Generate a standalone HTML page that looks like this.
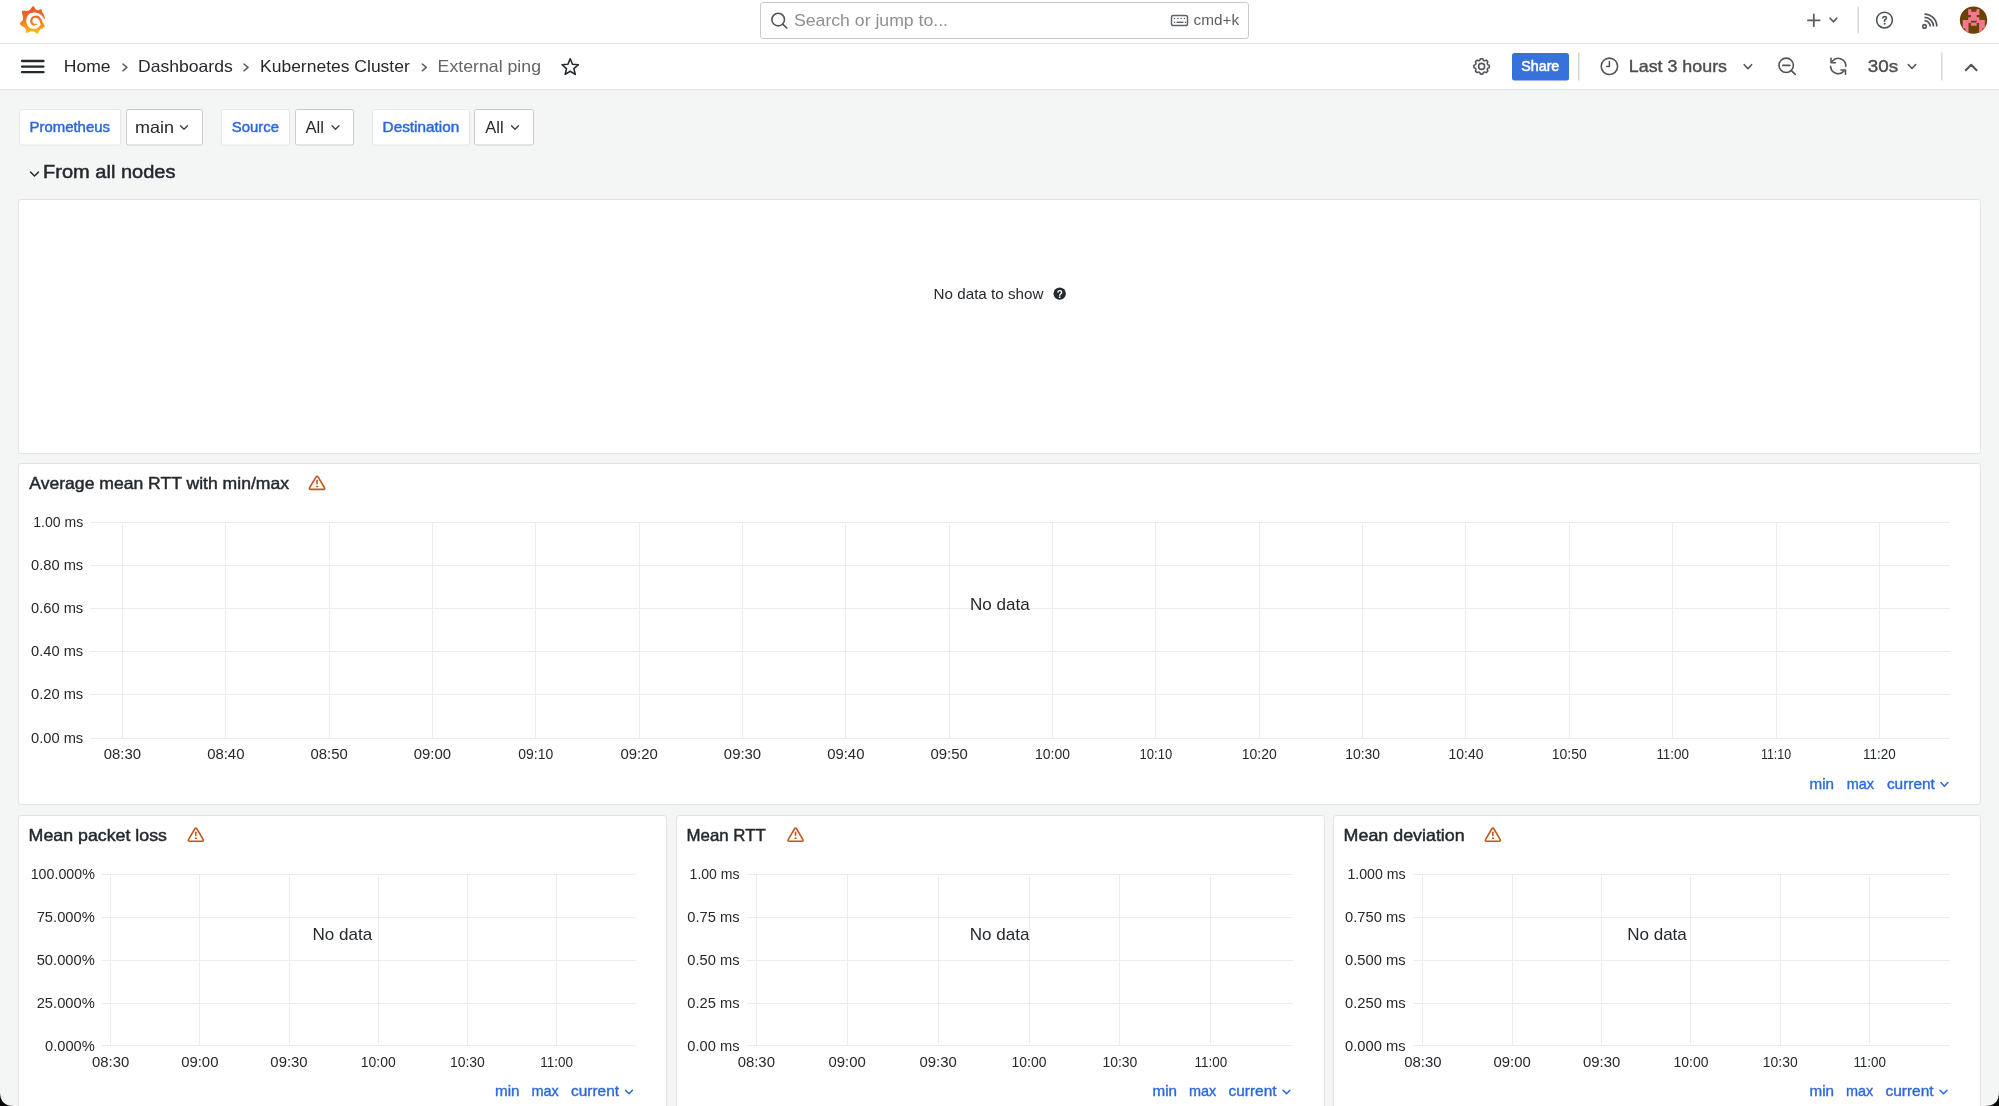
<!DOCTYPE html>
<html><head><meta charset="utf-8"><title>External ping - Dashboards - Grafana</title>
<style>
html,body{margin:0;padding:0;background:#f4f5f5;overflow:hidden}
svg{display:block;font-family:"Liberation Sans", sans-serif;will-change:transform}
</style></head>
<body>
<svg width="1999" height="1106" viewBox="0 0 1999 1106">
<rect x="0" y="0" width="1999" height="1106" fill="#f4f5f5" stroke="none" stroke-width="1" rx="0"/>
<rect x="0" y="0" width="1999" height="43" fill="#ffffff" stroke="none" stroke-width="1" rx="0"/>
<rect x="0" y="44" width="1999" height="45" fill="#ffffff" stroke="none" stroke-width="1" rx="0"/>
<line x1="0" y1="43.5" x2="1999" y2="43.5" stroke="#e4e5e6" stroke-width="1"/>
<line x1="0" y1="89.5" x2="1999" y2="89.5" stroke="#e4e5e6" stroke-width="1"/>
<defs><linearGradient id="lg" gradientUnits="userSpaceOnUse" x1="0" y1="80" x2="0" y2="1040"><stop offset="0" stop-color="#f05228"/><stop offset="0.45" stop-color="#f26d22"/><stop offset="0.75" stop-color="#f59c1a"/><stop offset="1" stop-color="#fbca0a"/></linearGradient></defs>
<g transform="translate(16 4) scale(0.028935)">
<path fill="url(#lg)" d="M600 80 C640 110 660 170 700 195 C740 215 790 230 830 185 C880 160 900 200 895 270 C940 320 985 400 1000 500 C1000 540 985 540 975 530 L935 640 C950 700 1000 740 1000 775 C960 820 900 810 860 850 C800 900 800 960 760 1025 C720 1040 690 1000 660 965 C600 950 520 950 470 960 C420 990 380 1010 350 990 C340 940 340 880 310 830 C270 780 160 760 130 690 C140 640 200 600 235 560 C250 500 240 430 220 370 C200 300 200 250 230 235 C290 225 360 250 420 235 C470 215 510 180 540 120 C560 90 580 75 600 80 Z"/>
<path fill="#fff" d="M610 290 C760 290 870 340 945 470 C985 540 990 560 1010 580 L935 640 L880 700 L820 760 C760 830 700 860 620 862 C470 862 355 740 355 576 C355 410 470 290 610 290 Z"/>
<path fill="none" stroke="url(#lg)" stroke-width="78" stroke-linecap="butt" d="M880 860 C900 760 895 640 850 560 C800 460 720 420 650 440 C560 460 520 540 530 610 C540 680 590 720 640 718"/>
<path fill="none" stroke="url(#lg)" stroke-width="40" stroke-linecap="round" d="M640 718 C670 716 695 705 715 700"/>
</g>
<rect x="760.5" y="2.5" width="488" height="36" fill="#fff" stroke="#c8cacc" stroke-width="1" rx="2.5"/>
<circle cx="778.2" cy="19.6" r="6.3" fill="none" stroke="#505458" stroke-width="1.6"/>
<path d="M782.9 24.3 L786.8 28.0" fill="none" stroke="#505458" stroke-width="1.7" stroke-linecap="round" stroke-linejoin="round"/>
<text x="794.0" y="26.3" font-size="17" fill="#8d9093" font-weight="400" text-anchor="start" textLength="154.0" lengthAdjust="spacingAndGlyphs">Search or jump to...</text>
<rect x="1171.5" y="15.5" width="16" height="10" fill="none" stroke="#5f6367" stroke-width="1.5" rx="1.8"/>
<rect x="1173.9" y="17.8" width="1.3" height="1.3" fill="#5f6367" stroke="none" stroke-width="1" rx="0"/>
<rect x="1177.2" y="17.8" width="1.3" height="1.3" fill="#5f6367" stroke="none" stroke-width="1" rx="0"/>
<rect x="1180.5" y="17.8" width="1.3" height="1.3" fill="#5f6367" stroke="none" stroke-width="1" rx="0"/>
<rect x="1183.8000000000002" y="17.8" width="1.3" height="1.3" fill="#5f6367" stroke="none" stroke-width="1" rx="0"/>
<rect x="1176.5" y="21.6" width="7" height="1.4" fill="#5f6367" stroke="none" stroke-width="1" rx="0"/>
<rect x="1173.9" y="21.6" width="1.3" height="1.4" fill="#5f6367" stroke="none" stroke-width="1" rx="0"/>
<rect x="1184.8" y="21.6" width="1.3" height="1.4" fill="#5f6367" stroke="none" stroke-width="1" rx="0"/>
<text x="1193.6" y="25.0" font-size="14" fill="#5c6064" font-weight="400" text-anchor="start" textLength="45.6" lengthAdjust="spacingAndGlyphs">cmd+k</text>
<path d="M1813.8 14.4 V26.2 M1807.9 20.3 H1819.7" fill="none" stroke="#585c60" stroke-width="1.75" stroke-linecap="round" stroke-linejoin="round"/>
<path d="M1830.1 18.2 L1833.4 21.8 L1836.7 18.2" fill="none" stroke="#585c60" stroke-width="1.7" stroke-linecap="round" stroke-linejoin="round"/>
<line x1="1858.3" y1="6.5" x2="1858.3" y2="33.5" stroke="#d5d7d8" stroke-width="1.5"/>
<circle cx="1884.5" cy="20.1" r="7.9" fill="none" stroke="#505458" stroke-width="1.6"/>
<path d="M1882.8 18.0 Q1882.9 16.5 1884.6 16.5 Q1886.4 16.5 1886.4 18.0 Q1886.4 19.3 1884.6 20.0 V21.2" fill="none" stroke="#505458" stroke-width="1.6" stroke-linecap="round" stroke-linejoin="round"/>
<circle cx="1884.6" cy="23.7" r="1.0" fill="#505458"/>
<circle cx="1924.5" cy="26.4" r="1.75" fill="none" stroke="#53575b" stroke-width="1.6"/>
<path d="M1924.50 20.70 A5.7 5.7 0 0 1 1930.20 26.40" fill="none" stroke="#53575b" stroke-width="1.7" stroke-linecap="butt"/>
<path d="M1924.50 17.40 A9.0 9.0 0 0 1 1933.50 26.40" fill="none" stroke="#53575b" stroke-width="1.7" stroke-linecap="butt"/>
<path d="M1924.50 14.10 A12.3 12.3 0 0 1 1936.80 26.40" fill="none" stroke="#53575b" stroke-width="1.7" stroke-linecap="butt"/>
<clipPath id="avc"><circle cx="1973.5" cy="20.1" r="13.7"/></clipPath>
<g clip-path="url(#avc)">
<rect x="1959" y="6" width="29" height="29" fill="#6a4206"/>
<path fill="#f3778f" d="M1968.19 9.13h3.03v3.03h-3.03ZM1976.38 9.13h3.03v3.03h-3.03ZM1968.19 11.86h3.03v3.03h-3.03ZM1970.92 11.86h3.03v3.03h-3.03ZM1973.65 11.86h3.03v3.03h-3.03ZM1976.38 11.86h3.03v3.03h-3.03ZM1970.92 14.59h3.03v3.03h-3.03ZM1973.65 14.59h3.03v3.03h-3.03ZM1968.19 17.32h3.03v3.03h-3.03ZM1970.92 17.32h3.03v3.03h-3.03ZM1973.65 17.32h3.03v3.03h-3.03ZM1976.38 17.32h3.03v3.03h-3.03ZM1962.73 20.05h3.03v3.03h-3.03ZM1965.46 20.05h3.03v3.03h-3.03ZM1968.19 20.05h3.03v3.03h-3.03ZM1976.38 20.05h3.03v3.03h-3.03ZM1979.11 20.05h3.03v3.03h-3.03ZM1981.84 20.05h3.03v3.03h-3.03ZM1962.73 22.78h3.03v3.03h-3.03ZM1965.46 22.78h3.03v3.03h-3.03ZM1970.92 22.78h3.03v3.03h-3.03ZM1973.65 22.78h3.03v3.03h-3.03ZM1979.11 22.78h3.03v3.03h-3.03ZM1981.84 22.78h3.03v3.03h-3.03ZM1962.73 25.51h3.03v3.03h-3.03ZM1965.46 25.51h3.03v3.03h-3.03ZM1979.11 25.51h3.03v3.03h-3.03ZM1981.84 25.51h3.03v3.03h-3.03ZM1965.46 28.24h3.03v3.03h-3.03ZM1979.11 28.24h3.03v3.03h-3.03ZM1965.46 30.97h3.03v3.03h-3.03ZM1979.11 30.97h3.03v3.03h-3.03Z"/>
<rect x="1970.92" y="20.75" width="5.46" height="1.8" fill="#6a4206"/>
<rect x="1970.92" y="20.05" width="5.46" height="0.7" fill="#f3778f"/>
<rect x="1970.92" y="22.55" width="5.46" height="0.3" fill="#f3778f"/>
</g>
<path d="M22 61.0 H43.5" fill="none" stroke="#24292e" stroke-width="2.3" stroke-linecap="round" stroke-linejoin="round"/>
<path d="M22 66.6 H43.5" fill="none" stroke="#24292e" stroke-width="2.3" stroke-linecap="round" stroke-linejoin="round"/>
<path d="M22 72.2 H43.5" fill="none" stroke="#24292e" stroke-width="2.3" stroke-linecap="round" stroke-linejoin="round"/>
<text x="63.8" y="72.1" font-size="16.5" fill="#24292e" font-weight="400" text-anchor="start" textLength="46.8" lengthAdjust="spacingAndGlyphs">Home</text>
<path d="M122.9 64.0 L126.9 67.4 L122.9 70.8" fill="none" stroke="#5b5f62" stroke-width="1.55" stroke-linecap="round" stroke-linejoin="round"/>
<text x="138.0" y="72.1" font-size="16.5" fill="#24292e" font-weight="400" text-anchor="start" textLength="94.8" lengthAdjust="spacingAndGlyphs">Dashboards</text>
<path d="M244.0 64.0 L248.0 67.4 L244.0 70.8" fill="none" stroke="#5b5f62" stroke-width="1.55" stroke-linecap="round" stroke-linejoin="round"/>
<text x="260.0" y="72.1" font-size="16.5" fill="#24292e" font-weight="400" text-anchor="start" textLength="149.8" lengthAdjust="spacingAndGlyphs">Kubernetes Cluster</text>
<path d="M422.3 64.0 L426.3 67.4 L422.3 70.8" fill="none" stroke="#5b5f62" stroke-width="1.55" stroke-linecap="round" stroke-linejoin="round"/>
<text x="437.6" y="72.1" font-size="16.5" fill="#62666a" font-weight="400" text-anchor="start" textLength="103.4" lengthAdjust="spacingAndGlyphs">External ping</text>
<path d="M570.20 58.80 L572.49 64.24 L578.38 64.74 L573.91 68.61 L575.25 74.36 L570.20 71.30 L565.15 74.36 L566.49 68.61 L562.02 64.74 L567.91 64.24 Z" fill="none" stroke="#24292e" stroke-width="1.6" stroke-linecap="round" stroke-linejoin="round"/>
<path d="M1480.40 58.79 A7.7 7.7 0 0 1 1482.80 58.79 Q1483.48 61.87 1486.13 60.17 A7.7 7.7 0 0 1 1487.83 61.87 Q1486.13 64.52 1489.21 65.20 A7.7 7.7 0 0 1 1489.21 67.60 Q1486.13 68.28 1487.83 70.93 A7.7 7.7 0 0 1 1486.13 72.63 Q1483.48 70.93 1482.80 74.01 A7.7 7.7 0 0 1 1480.40 74.01 Q1479.72 70.93 1477.07 72.63 A7.7 7.7 0 0 1 1475.37 70.93 Q1477.07 68.28 1473.99 67.60 A7.7 7.7 0 0 1 1473.99 65.20 Q1477.07 64.52 1475.37 61.87 A7.7 7.7 0 0 1 1477.07 60.17 Q1479.72 61.87 1480.40 58.79 Z" fill="none" stroke="#505458" stroke-width="1.6" stroke-linejoin="round"/><circle cx="1481.6" cy="66.4" r="3.0" fill="none" stroke="#505458" stroke-width="1.6"/>
<rect x="1512" y="53" width="57" height="27.5" fill="#3671dc" stroke="none" stroke-width="1" rx="2.5"/>
<text x="1540.3" y="71.0" font-size="14.8" fill="#ffffff" font-weight="400" text-anchor="middle" textLength="38.0" lengthAdjust="spacingAndGlyphs" stroke="#ffffff" stroke-width="0.55">Share</text>
<line x1="1578.8" y1="52.5" x2="1578.8" y2="80.5" stroke="#d5d7d8" stroke-width="1.5"/>
<circle cx="1609.4" cy="66.3" r="8.2" fill="none" stroke="#505458" stroke-width="1.6"/>
<path d="M1609.4 61.6 V66.5 H1606.8" fill="none" stroke="#505458" stroke-width="1.5" stroke-linecap="round" stroke-linejoin="round"/>
<text x="1628.8" y="72.3" font-size="16.5" fill="#4a4e52" font-weight="400" text-anchor="start" textLength="98.2" lengthAdjust="spacingAndGlyphs" stroke="#4a4e52" stroke-width="0.4">Last 3 hours</text>
<path d="M1744.2 64.7 L1747.9 68.7 L1751.6 64.7" fill="none" stroke="#505458" stroke-width="1.6" stroke-linecap="round" stroke-linejoin="round"/>
<circle cx="1786.2" cy="65.3" r="7.2" fill="none" stroke="#505458" stroke-width="1.6"/>
<path d="M1791.6 70.8 L1795.2 74.3" fill="none" stroke="#505458" stroke-width="1.7" stroke-linecap="round" stroke-linejoin="round"/>
<path d="M1782.8 65.4 H1789.8" fill="none" stroke="#505458" stroke-width="1.7" stroke-linecap="round" stroke-linejoin="round"/>
<g fill="none" stroke="#505458" stroke-width="1.6" stroke-linecap="round" stroke-linejoin="round">
<path d="M1832.4 61.1 A7.6 7.6 0 0 1 1845.8 66.4"/>
<path d="M1830.6 66.2 A7.6 7.6 0 0 0 1844.0 70.9"/>
<path d="M1831.0 58.3 V62.8 H1835.4"/>
<path d="M1841.0 70.0 H1845.5 V74.3"/>
</g>
<text x="1867.8" y="71.9" font-size="16.5" fill="#4a4e52" font-weight="400" text-anchor="start" textLength="30.4" lengthAdjust="spacingAndGlyphs" stroke="#4a4e52" stroke-width="0.4">30s</text>
<path d="M1908.3 64.5 L1912.0 68.5 L1915.7 64.5" fill="none" stroke="#505458" stroke-width="1.6" stroke-linecap="round" stroke-linejoin="round"/>
<line x1="1941.8" y1="52.5" x2="1941.8" y2="80.5" stroke="#d5d7d8" stroke-width="1.5"/>
<path d="M1965.8 70.3 L1971.2 64.7 L1976.6 70.3" fill="none" stroke="#505458" stroke-width="2.0" stroke-linecap="round" stroke-linejoin="round"/>
<rect x="19.5" y="109.5" width="101" height="35.5" fill="#fff" stroke="#e4e5e6" stroke-width="1" rx="2"/>
<text x="29.5" y="132.2" font-size="15" fill="#2b67de" font-weight="400" text-anchor="start" textLength="80.5" lengthAdjust="spacingAndGlyphs" stroke="#2b67de" stroke-width="0.45">Prometheus</text>
<rect x="126.5" y="109.5" width="76" height="35.5" fill="#fff" stroke="#c9cbcd" stroke-width="1" rx="2"/>
<text x="135.0" y="133.0" font-size="16.5" fill="#24292e" font-weight="400" text-anchor="start" textLength="39.0" lengthAdjust="spacingAndGlyphs">main</text>
<path d="M180.5 125.7 L184.0 129.3 L187.5 125.7" fill="none" stroke="#3d4145" stroke-width="1.35" stroke-linecap="round" stroke-linejoin="round"/>
<rect x="221.5" y="109.5" width="68" height="35.5" fill="#fff" stroke="#e4e5e6" stroke-width="1" rx="2"/>
<text x="231.8" y="132.2" font-size="15" fill="#2b67de" font-weight="400" text-anchor="start" textLength="47.2" lengthAdjust="spacingAndGlyphs" stroke="#2b67de" stroke-width="0.45">Source</text>
<rect x="295.5" y="109.5" width="58" height="35.5" fill="#fff" stroke="#c9cbcd" stroke-width="1" rx="2"/>
<text x="305.5" y="133.0" font-size="16.5" fill="#24292e" font-weight="400" text-anchor="start" textLength="18.5" lengthAdjust="spacingAndGlyphs">All</text>
<path d="M332.0 125.7 L335.5 129.3 L339.0 125.7" fill="none" stroke="#3d4145" stroke-width="1.35" stroke-linecap="round" stroke-linejoin="round"/>
<rect x="372.5" y="109.5" width="97" height="35.5" fill="#fff" stroke="#e4e5e6" stroke-width="1" rx="2"/>
<text x="382.6" y="132.2" font-size="15" fill="#2b67de" font-weight="400" text-anchor="start" textLength="76.6" lengthAdjust="spacingAndGlyphs" stroke="#2b67de" stroke-width="0.45">Destination</text>
<rect x="474.5" y="109.5" width="59" height="35.5" fill="#fff" stroke="#c9cbcd" stroke-width="1" rx="2"/>
<text x="485.3" y="133.0" font-size="16.5" fill="#24292e" font-weight="400" text-anchor="start" textLength="18.3" lengthAdjust="spacingAndGlyphs">All</text>
<path d="M511.5 125.7 L515.0 129.3 L518.5 125.7" fill="none" stroke="#3d4145" stroke-width="1.35" stroke-linecap="round" stroke-linejoin="round"/>
<path d="M30.5 172.0 L34.5 176.0 L38.5 172.0" fill="none" stroke="#24292e" stroke-width="1.45" stroke-linecap="round" stroke-linejoin="round"/>
<text x="43.1" y="178.4" font-size="18.8" fill="#24292e" font-weight="400" text-anchor="start" textLength="132.3" lengthAdjust="spacingAndGlyphs" stroke="#24292e" stroke-width="0.5">From all nodes</text>
<rect x="18.5" y="199.5" width="1962" height="254" fill="#ffffff" stroke="#e3e4e5" stroke-width="1" rx="2.5"/>
<text x="933.6" y="298.8" font-size="15" fill="#24292e" font-weight="400" text-anchor="start" textLength="109.8" lengthAdjust="spacingAndGlyphs">No data to show</text>
<circle cx="1059.7" cy="293.6" r="6.2" fill="#24292e"/>
<text x="1059.7" y="297.6" font-size="10" fill="#ffffff" font-weight="700" text-anchor="middle">?</text>
<rect x="18.5" y="463.5" width="1962" height="341" fill="#ffffff" stroke="#e3e4e5" stroke-width="1" rx="2.5"/>
<text x="29.3" y="488.7" font-size="16.5" fill="#24292e" font-weight="400" text-anchor="start" textLength="259.7" lengthAdjust="spacingAndGlyphs" stroke="#24292e" stroke-width="0.45">Average mean RTT with min/max</text>
<path d="M315.92 477.19 Q317.05 475.30 318.18 477.19 L324.37 487.51 Q325.50 489.40 323.30 489.40 L310.80 489.40 Q308.60 489.40 309.73 487.51 Z" fill="none" stroke="#c0581c" stroke-width="1.6" stroke-linecap="round" stroke-linejoin="round"/>
<path d="M317.05 480.40 V483.70" fill="none" stroke="#c0581c" stroke-width="1.6" stroke-linecap="round" stroke-linejoin="round"/>
<path d="M316.55 486.40 H317.55" fill="none" stroke="#c0581c" stroke-width="1.5" stroke-linecap="round" stroke-linejoin="round"/>
<line x1="90.2" y1="522.5" x2="1950" y2="522.5" stroke="#ebecec" stroke-width="1"/>
<text x="83.2" y="527.0" font-size="14" fill="#24292e" font-weight="400" text-anchor="end" textLength="49.9" lengthAdjust="spacingAndGlyphs">1.00 ms</text>
<line x1="90.2" y1="565.5" x2="1950" y2="565.5" stroke="#ebecec" stroke-width="1"/>
<text x="83.2" y="570.1" font-size="14" fill="#24292e" font-weight="400" text-anchor="end" textLength="52.2" lengthAdjust="spacingAndGlyphs">0.80 ms</text>
<line x1="90.2" y1="608.5" x2="1950" y2="608.5" stroke="#ebecec" stroke-width="1"/>
<text x="83.2" y="613.2" font-size="14" fill="#24292e" font-weight="400" text-anchor="end" textLength="52.2" lengthAdjust="spacingAndGlyphs">0.60 ms</text>
<line x1="90.2" y1="651.5" x2="1950" y2="651.5" stroke="#ebecec" stroke-width="1"/>
<text x="83.2" y="656.3" font-size="14" fill="#24292e" font-weight="400" text-anchor="end" textLength="52.2" lengthAdjust="spacingAndGlyphs">0.40 ms</text>
<line x1="90.2" y1="694.5" x2="1950" y2="694.5" stroke="#ebecec" stroke-width="1"/>
<text x="83.2" y="699.4" font-size="14" fill="#24292e" font-weight="400" text-anchor="end" textLength="52.2" lengthAdjust="spacingAndGlyphs">0.20 ms</text>
<line x1="90.2" y1="738.5" x2="1950" y2="738.5" stroke="#ebecec" stroke-width="1"/>
<text x="83.2" y="742.5" font-size="14" fill="#24292e" font-weight="400" text-anchor="end" textLength="52.2" lengthAdjust="spacingAndGlyphs">0.00 ms</text>
<line x1="122.5" y1="522.4" x2="122.5" y2="738.4" stroke="#ebecec" stroke-width="1"/>
<text x="122.4" y="759.4" font-size="14" fill="#24292e" font-weight="400" text-anchor="middle" textLength="37.3" lengthAdjust="spacingAndGlyphs">08:30</text>
<line x1="225.5" y1="522.4" x2="225.5" y2="738.4" stroke="#ebecec" stroke-width="1"/>
<text x="225.8" y="759.4" font-size="14" fill="#24292e" font-weight="400" text-anchor="middle" textLength="37.3" lengthAdjust="spacingAndGlyphs">08:40</text>
<line x1="329.5" y1="522.4" x2="329.5" y2="738.4" stroke="#ebecec" stroke-width="1"/>
<text x="329.1" y="759.4" font-size="14" fill="#24292e" font-weight="400" text-anchor="middle" textLength="37.3" lengthAdjust="spacingAndGlyphs">08:50</text>
<line x1="432.5" y1="522.4" x2="432.5" y2="738.4" stroke="#ebecec" stroke-width="1"/>
<text x="432.4" y="759.4" font-size="14" fill="#24292e" font-weight="400" text-anchor="middle" textLength="37.3" lengthAdjust="spacingAndGlyphs">09:00</text>
<line x1="535.5" y1="522.4" x2="535.5" y2="738.4" stroke="#ebecec" stroke-width="1"/>
<text x="535.8" y="759.4" font-size="14" fill="#24292e" font-weight="400" text-anchor="middle" textLength="34.9" lengthAdjust="spacingAndGlyphs">09:10</text>
<line x1="639.5" y1="522.4" x2="639.5" y2="738.4" stroke="#ebecec" stroke-width="1"/>
<text x="639.1" y="759.4" font-size="14" fill="#24292e" font-weight="400" text-anchor="middle" textLength="37.3" lengthAdjust="spacingAndGlyphs">09:20</text>
<line x1="742.5" y1="522.4" x2="742.5" y2="738.4" stroke="#ebecec" stroke-width="1"/>
<text x="742.5" y="759.4" font-size="14" fill="#24292e" font-weight="400" text-anchor="middle" textLength="37.3" lengthAdjust="spacingAndGlyphs">09:30</text>
<line x1="845.5" y1="522.4" x2="845.5" y2="738.4" stroke="#ebecec" stroke-width="1"/>
<text x="845.8" y="759.4" font-size="14" fill="#24292e" font-weight="400" text-anchor="middle" textLength="37.3" lengthAdjust="spacingAndGlyphs">09:40</text>
<line x1="949.5" y1="522.4" x2="949.5" y2="738.4" stroke="#ebecec" stroke-width="1"/>
<text x="949.2" y="759.4" font-size="14" fill="#24292e" font-weight="400" text-anchor="middle" textLength="37.3" lengthAdjust="spacingAndGlyphs">09:50</text>
<line x1="1052.5" y1="522.4" x2="1052.5" y2="738.4" stroke="#ebecec" stroke-width="1"/>
<text x="1052.5" y="759.4" font-size="14" fill="#24292e" font-weight="400" text-anchor="middle" textLength="34.9" lengthAdjust="spacingAndGlyphs">10:00</text>
<line x1="1155.5" y1="522.4" x2="1155.5" y2="738.4" stroke="#ebecec" stroke-width="1"/>
<text x="1155.9" y="759.4" font-size="14" fill="#24292e" font-weight="400" text-anchor="middle" textLength="32.6" lengthAdjust="spacingAndGlyphs">10:10</text>
<line x1="1259.5" y1="522.4" x2="1259.5" y2="738.4" stroke="#ebecec" stroke-width="1"/>
<text x="1259.2" y="759.4" font-size="14" fill="#24292e" font-weight="400" text-anchor="middle" textLength="34.9" lengthAdjust="spacingAndGlyphs">10:20</text>
<line x1="1362.5" y1="522.4" x2="1362.5" y2="738.4" stroke="#ebecec" stroke-width="1"/>
<text x="1362.6" y="759.4" font-size="14" fill="#24292e" font-weight="400" text-anchor="middle" textLength="34.9" lengthAdjust="spacingAndGlyphs">10:30</text>
<line x1="1465.5" y1="522.4" x2="1465.5" y2="738.4" stroke="#ebecec" stroke-width="1"/>
<text x="1466.0" y="759.4" font-size="14" fill="#24292e" font-weight="400" text-anchor="middle" textLength="34.9" lengthAdjust="spacingAndGlyphs">10:40</text>
<line x1="1569.5" y1="522.4" x2="1569.5" y2="738.4" stroke="#ebecec" stroke-width="1"/>
<text x="1569.3" y="759.4" font-size="14" fill="#24292e" font-weight="400" text-anchor="middle" textLength="34.9" lengthAdjust="spacingAndGlyphs">10:50</text>
<line x1="1672.5" y1="522.4" x2="1672.5" y2="738.4" stroke="#ebecec" stroke-width="1"/>
<text x="1672.7" y="759.4" font-size="14" fill="#24292e" font-weight="400" text-anchor="middle" textLength="32.6" lengthAdjust="spacingAndGlyphs">11:00</text>
<line x1="1776.5" y1="522.4" x2="1776.5" y2="738.4" stroke="#ebecec" stroke-width="1"/>
<text x="1776.0" y="759.4" font-size="14" fill="#24292e" font-weight="400" text-anchor="middle" textLength="30.2" lengthAdjust="spacingAndGlyphs">11:10</text>
<line x1="1879.5" y1="522.4" x2="1879.5" y2="738.4" stroke="#ebecec" stroke-width="1"/>
<text x="1879.3" y="759.4" font-size="14" fill="#24292e" font-weight="400" text-anchor="middle" textLength="32.6" lengthAdjust="spacingAndGlyphs">11:20</text>
<text x="999.8" y="609.9" font-size="17" fill="#24292e" font-weight="400" text-anchor="middle" textLength="59.7" lengthAdjust="spacingAndGlyphs">No data</text>
<text x="1809.5" y="788.6" font-size="14.5" fill="#2b67de" font-weight="400" text-anchor="start" textLength="24.5" lengthAdjust="spacingAndGlyphs" stroke="#2b67de" stroke-width="0.35">min</text>
<text x="1846.8" y="788.6" font-size="14.5" fill="#2b67de" font-weight="400" text-anchor="start" textLength="27.3" lengthAdjust="spacingAndGlyphs" stroke="#2b67de" stroke-width="0.35">max</text>
<text x="1886.9" y="788.6" font-size="14.5" fill="#2b67de" font-weight="400" text-anchor="start" textLength="48.0" lengthAdjust="spacingAndGlyphs" stroke="#2b67de" stroke-width="0.35">current</text>
<path d="M1940.9 782.6 L1944.4 786.2 L1947.9 782.6" fill="none" stroke="#2b67de" stroke-width="1.5" stroke-linecap="round" stroke-linejoin="round"/>
<rect x="18.5" y="815.5" width="648" height="305" fill="#ffffff" stroke="#e3e4e5" stroke-width="1" rx="2.5"/>
<text x="28.6" y="840.5" font-size="16.5" fill="#24292e" font-weight="400" text-anchor="start" textLength="138.4" lengthAdjust="spacingAndGlyphs" stroke="#24292e" stroke-width="0.45">Mean packet loss</text>
<path d="M194.73 828.99 Q195.85 827.10 196.97 828.99 L203.08 839.31 Q204.20 841.20 202.00 841.20 L189.70 841.20 Q187.50 841.20 188.62 839.31 Z" fill="none" stroke="#c0581c" stroke-width="1.6" stroke-linecap="round" stroke-linejoin="round"/>
<path d="M195.85 832.20 V835.50" fill="none" stroke="#c0581c" stroke-width="1.6" stroke-linecap="round" stroke-linejoin="round"/>
<path d="M195.35 838.20 H196.35" fill="none" stroke="#c0581c" stroke-width="1.5" stroke-linecap="round" stroke-linejoin="round"/>
<line x1="102" y1="874.5" x2="635.5" y2="874.5" stroke="#ebecec" stroke-width="1"/>
<text x="94.8" y="879.4" font-size="14" fill="#24292e" font-weight="400" text-anchor="end" textLength="64.1" lengthAdjust="spacingAndGlyphs">100.000%</text>
<line x1="102" y1="917.5" x2="635.5" y2="917.5" stroke="#ebecec" stroke-width="1"/>
<text x="94.8" y="922.2" font-size="14" fill="#24292e" font-weight="400" text-anchor="end" textLength="58.1" lengthAdjust="spacingAndGlyphs">75.000%</text>
<line x1="102" y1="960.5" x2="635.5" y2="960.5" stroke="#ebecec" stroke-width="1"/>
<text x="94.8" y="965.1" font-size="14" fill="#24292e" font-weight="400" text-anchor="end" textLength="58.1" lengthAdjust="spacingAndGlyphs">50.000%</text>
<line x1="102" y1="1003.5" x2="635.5" y2="1003.5" stroke="#ebecec" stroke-width="1"/>
<text x="94.8" y="1007.9" font-size="14" fill="#24292e" font-weight="400" text-anchor="end" textLength="58.1" lengthAdjust="spacingAndGlyphs">25.000%</text>
<line x1="102" y1="1045.5" x2="635.5" y2="1045.5" stroke="#ebecec" stroke-width="1"/>
<text x="94.8" y="1050.8" font-size="14" fill="#24292e" font-weight="400" text-anchor="end" textLength="49.8" lengthAdjust="spacingAndGlyphs">0.000%</text>
<line x1="110.5" y1="874.3" x2="110.5" y2="1045.9" stroke="#ebecec" stroke-width="1"/>
<text x="110.6" y="1067.0" font-size="14" fill="#24292e" font-weight="400" text-anchor="middle" textLength="37.3" lengthAdjust="spacingAndGlyphs">08:30</text>
<line x1="199.5" y1="874.3" x2="199.5" y2="1045.9" stroke="#ebecec" stroke-width="1"/>
<text x="199.8" y="1067.0" font-size="14" fill="#24292e" font-weight="400" text-anchor="middle" textLength="37.3" lengthAdjust="spacingAndGlyphs">09:00</text>
<line x1="289.5" y1="874.3" x2="289.5" y2="1045.9" stroke="#ebecec" stroke-width="1"/>
<text x="289.0" y="1067.0" font-size="14" fill="#24292e" font-weight="400" text-anchor="middle" textLength="37.3" lengthAdjust="spacingAndGlyphs">09:30</text>
<line x1="378.5" y1="874.3" x2="378.5" y2="1045.9" stroke="#ebecec" stroke-width="1"/>
<text x="378.2" y="1067.0" font-size="14" fill="#24292e" font-weight="400" text-anchor="middle" textLength="34.9" lengthAdjust="spacingAndGlyphs">10:00</text>
<line x1="467.5" y1="874.3" x2="467.5" y2="1045.9" stroke="#ebecec" stroke-width="1"/>
<text x="467.4" y="1067.0" font-size="14" fill="#24292e" font-weight="400" text-anchor="middle" textLength="34.9" lengthAdjust="spacingAndGlyphs">10:30</text>
<line x1="556.5" y1="874.3" x2="556.5" y2="1045.9" stroke="#ebecec" stroke-width="1"/>
<text x="556.6" y="1067.0" font-size="14" fill="#24292e" font-weight="400" text-anchor="middle" textLength="32.6" lengthAdjust="spacingAndGlyphs">11:00</text>
<text x="342.4" y="940.0" font-size="17" fill="#24292e" font-weight="400" text-anchor="middle" textLength="59.7" lengthAdjust="spacingAndGlyphs">No data</text>
<text x="495.0" y="1096.2" font-size="14.5" fill="#2b67de" font-weight="400" text-anchor="start" textLength="24.5" lengthAdjust="spacingAndGlyphs" stroke="#2b67de" stroke-width="0.35">min</text>
<text x="531.5" y="1096.2" font-size="14.5" fill="#2b67de" font-weight="400" text-anchor="start" textLength="27.3" lengthAdjust="spacingAndGlyphs" stroke="#2b67de" stroke-width="0.35">max</text>
<text x="571.0" y="1096.2" font-size="14.5" fill="#2b67de" font-weight="400" text-anchor="start" textLength="48.0" lengthAdjust="spacingAndGlyphs" stroke="#2b67de" stroke-width="0.35">current</text>
<path d="M625.5 1090.2 L629.0 1093.8 L632.5 1090.2" fill="none" stroke="#2b67de" stroke-width="1.5" stroke-linecap="round" stroke-linejoin="round"/>
<rect x="676.5" y="815.5" width="648" height="305" fill="#ffffff" stroke="#e3e4e5" stroke-width="1" rx="2.5"/>
<text x="686.6" y="840.5" font-size="16.5" fill="#24292e" font-weight="400" text-anchor="start" textLength="79.2" lengthAdjust="spacingAndGlyphs" stroke="#24292e" stroke-width="0.45">Mean RTT</text>
<path d="M794.43 828.99 Q795.55 827.10 796.67 828.99 L802.78 839.31 Q803.90 841.20 801.70 841.20 L789.40 841.20 Q787.20 841.20 788.32 839.31 Z" fill="none" stroke="#c0581c" stroke-width="1.6" stroke-linecap="round" stroke-linejoin="round"/>
<path d="M795.55 832.20 V835.50" fill="none" stroke="#c0581c" stroke-width="1.6" stroke-linecap="round" stroke-linejoin="round"/>
<path d="M795.05 838.20 H796.05" fill="none" stroke="#c0581c" stroke-width="1.5" stroke-linecap="round" stroke-linejoin="round"/>
<line x1="746.8" y1="874.5" x2="1293" y2="874.5" stroke="#ebecec" stroke-width="1"/>
<text x="739.5" y="879.4" font-size="14" fill="#24292e" font-weight="400" text-anchor="end" textLength="49.9" lengthAdjust="spacingAndGlyphs">1.00 ms</text>
<line x1="746.8" y1="917.5" x2="1293" y2="917.5" stroke="#ebecec" stroke-width="1"/>
<text x="739.5" y="922.2" font-size="14" fill="#24292e" font-weight="400" text-anchor="end" textLength="52.2" lengthAdjust="spacingAndGlyphs">0.75 ms</text>
<line x1="746.8" y1="960.5" x2="1293" y2="960.5" stroke="#ebecec" stroke-width="1"/>
<text x="739.5" y="965.1" font-size="14" fill="#24292e" font-weight="400" text-anchor="end" textLength="52.2" lengthAdjust="spacingAndGlyphs">0.50 ms</text>
<line x1="746.8" y1="1003.5" x2="1293" y2="1003.5" stroke="#ebecec" stroke-width="1"/>
<text x="739.5" y="1007.9" font-size="14" fill="#24292e" font-weight="400" text-anchor="end" textLength="52.2" lengthAdjust="spacingAndGlyphs">0.25 ms</text>
<line x1="746.8" y1="1045.5" x2="1293" y2="1045.5" stroke="#ebecec" stroke-width="1"/>
<text x="739.5" y="1050.8" font-size="14" fill="#24292e" font-weight="400" text-anchor="end" textLength="52.2" lengthAdjust="spacingAndGlyphs">0.00 ms</text>
<line x1="756.5" y1="874.3" x2="756.5" y2="1045.9" stroke="#ebecec" stroke-width="1"/>
<text x="756.3" y="1067.0" font-size="14" fill="#24292e" font-weight="400" text-anchor="middle" textLength="37.3" lengthAdjust="spacingAndGlyphs">08:30</text>
<line x1="847.5" y1="874.3" x2="847.5" y2="1045.9" stroke="#ebecec" stroke-width="1"/>
<text x="847.2" y="1067.0" font-size="14" fill="#24292e" font-weight="400" text-anchor="middle" textLength="37.3" lengthAdjust="spacingAndGlyphs">09:00</text>
<line x1="938.5" y1="874.3" x2="938.5" y2="1045.9" stroke="#ebecec" stroke-width="1"/>
<text x="938.1" y="1067.0" font-size="14" fill="#24292e" font-weight="400" text-anchor="middle" textLength="37.3" lengthAdjust="spacingAndGlyphs">09:30</text>
<line x1="1029.5" y1="874.3" x2="1029.5" y2="1045.9" stroke="#ebecec" stroke-width="1"/>
<text x="1029.0" y="1067.0" font-size="14" fill="#24292e" font-weight="400" text-anchor="middle" textLength="34.9" lengthAdjust="spacingAndGlyphs">10:00</text>
<line x1="1119.5" y1="874.3" x2="1119.5" y2="1045.9" stroke="#ebecec" stroke-width="1"/>
<text x="1119.9" y="1067.0" font-size="14" fill="#24292e" font-weight="400" text-anchor="middle" textLength="34.9" lengthAdjust="spacingAndGlyphs">10:30</text>
<line x1="1210.5" y1="874.3" x2="1210.5" y2="1045.9" stroke="#ebecec" stroke-width="1"/>
<text x="1210.8" y="1067.0" font-size="14" fill="#24292e" font-weight="400" text-anchor="middle" textLength="32.6" lengthAdjust="spacingAndGlyphs">11:00</text>
<text x="999.6" y="940.0" font-size="17" fill="#24292e" font-weight="400" text-anchor="middle" textLength="59.7" lengthAdjust="spacingAndGlyphs">No data</text>
<text x="1152.5" y="1096.2" font-size="14.5" fill="#2b67de" font-weight="400" text-anchor="start" textLength="24.5" lengthAdjust="spacingAndGlyphs" stroke="#2b67de" stroke-width="0.35">min</text>
<text x="1189.0" y="1096.2" font-size="14.5" fill="#2b67de" font-weight="400" text-anchor="start" textLength="27.3" lengthAdjust="spacingAndGlyphs" stroke="#2b67de" stroke-width="0.35">max</text>
<text x="1228.5" y="1096.2" font-size="14.5" fill="#2b67de" font-weight="400" text-anchor="start" textLength="48.0" lengthAdjust="spacingAndGlyphs" stroke="#2b67de" stroke-width="0.35">current</text>
<path d="M1283.0 1090.2 L1286.5 1093.8 L1290.0 1090.2" fill="none" stroke="#2b67de" stroke-width="1.5" stroke-linecap="round" stroke-linejoin="round"/>
<rect x="1333.5" y="815.5" width="647" height="305" fill="#ffffff" stroke="#e3e4e5" stroke-width="1" rx="2.5"/>
<text x="1343.6" y="840.5" font-size="16.5" fill="#24292e" font-weight="400" text-anchor="start" textLength="121.1" lengthAdjust="spacingAndGlyphs" stroke="#24292e" stroke-width="0.45">Mean deviation</text>
<path d="M1491.73 828.99 Q1492.85 827.10 1493.97 828.99 L1500.08 839.31 Q1501.20 841.20 1499.00 841.20 L1486.70 841.20 Q1484.50 841.20 1485.62 839.31 Z" fill="none" stroke="#c0581c" stroke-width="1.6" stroke-linecap="round" stroke-linejoin="round"/>
<path d="M1492.85 832.20 V835.50" fill="none" stroke="#c0581c" stroke-width="1.6" stroke-linecap="round" stroke-linejoin="round"/>
<path d="M1492.35 838.20 H1493.35" fill="none" stroke="#c0581c" stroke-width="1.5" stroke-linecap="round" stroke-linejoin="round"/>
<line x1="1413.4" y1="874.5" x2="1950" y2="874.5" stroke="#ebecec" stroke-width="1"/>
<text x="1405.6" y="879.4" font-size="14" fill="#24292e" font-weight="400" text-anchor="end" textLength="58.2" lengthAdjust="spacingAndGlyphs">1.000 ms</text>
<line x1="1413.4" y1="917.5" x2="1950" y2="917.5" stroke="#ebecec" stroke-width="1"/>
<text x="1405.6" y="922.2" font-size="14" fill="#24292e" font-weight="400" text-anchor="end" textLength="60.6" lengthAdjust="spacingAndGlyphs">0.750 ms</text>
<line x1="1413.4" y1="960.5" x2="1950" y2="960.5" stroke="#ebecec" stroke-width="1"/>
<text x="1405.6" y="965.1" font-size="14" fill="#24292e" font-weight="400" text-anchor="end" textLength="60.6" lengthAdjust="spacingAndGlyphs">0.500 ms</text>
<line x1="1413.4" y1="1003.5" x2="1950" y2="1003.5" stroke="#ebecec" stroke-width="1"/>
<text x="1405.6" y="1007.9" font-size="14" fill="#24292e" font-weight="400" text-anchor="end" textLength="60.6" lengthAdjust="spacingAndGlyphs">0.250 ms</text>
<line x1="1413.4" y1="1045.5" x2="1950" y2="1045.5" stroke="#ebecec" stroke-width="1"/>
<text x="1405.6" y="1050.8" font-size="14" fill="#24292e" font-weight="400" text-anchor="end" textLength="60.6" lengthAdjust="spacingAndGlyphs">0.000 ms</text>
<line x1="1422.5" y1="874.3" x2="1422.5" y2="1045.9" stroke="#ebecec" stroke-width="1"/>
<text x="1422.9" y="1067.0" font-size="14" fill="#24292e" font-weight="400" text-anchor="middle" textLength="37.3" lengthAdjust="spacingAndGlyphs">08:30</text>
<line x1="1512.5" y1="874.3" x2="1512.5" y2="1045.9" stroke="#ebecec" stroke-width="1"/>
<text x="1512.2" y="1067.0" font-size="14" fill="#24292e" font-weight="400" text-anchor="middle" textLength="37.3" lengthAdjust="spacingAndGlyphs">09:00</text>
<line x1="1601.5" y1="874.3" x2="1601.5" y2="1045.9" stroke="#ebecec" stroke-width="1"/>
<text x="1601.6" y="1067.0" font-size="14" fill="#24292e" font-weight="400" text-anchor="middle" textLength="37.3" lengthAdjust="spacingAndGlyphs">09:30</text>
<line x1="1690.5" y1="874.3" x2="1690.5" y2="1045.9" stroke="#ebecec" stroke-width="1"/>
<text x="1691.0" y="1067.0" font-size="14" fill="#24292e" font-weight="400" text-anchor="middle" textLength="34.9" lengthAdjust="spacingAndGlyphs">10:00</text>
<line x1="1780.5" y1="874.3" x2="1780.5" y2="1045.9" stroke="#ebecec" stroke-width="1"/>
<text x="1780.3" y="1067.0" font-size="14" fill="#24292e" font-weight="400" text-anchor="middle" textLength="34.9" lengthAdjust="spacingAndGlyphs">10:30</text>
<line x1="1869.5" y1="874.3" x2="1869.5" y2="1045.9" stroke="#ebecec" stroke-width="1"/>
<text x="1869.7" y="1067.0" font-size="14" fill="#24292e" font-weight="400" text-anchor="middle" textLength="32.6" lengthAdjust="spacingAndGlyphs">11:00</text>
<text x="1657.0" y="940.0" font-size="17" fill="#24292e" font-weight="400" text-anchor="middle" textLength="59.7" lengthAdjust="spacingAndGlyphs">No data</text>
<text x="1809.5" y="1096.2" font-size="14.5" fill="#2b67de" font-weight="400" text-anchor="start" textLength="24.5" lengthAdjust="spacingAndGlyphs" stroke="#2b67de" stroke-width="0.35">min</text>
<text x="1846.0" y="1096.2" font-size="14.5" fill="#2b67de" font-weight="400" text-anchor="start" textLength="27.3" lengthAdjust="spacingAndGlyphs" stroke="#2b67de" stroke-width="0.35">max</text>
<text x="1885.5" y="1096.2" font-size="14.5" fill="#2b67de" font-weight="400" text-anchor="start" textLength="48.0" lengthAdjust="spacingAndGlyphs" stroke="#2b67de" stroke-width="0.35">current</text>
<path d="M1940.0 1090.2 L1943.5 1093.8 L1947.0 1090.2" fill="none" stroke="#2b67de" stroke-width="1.5" stroke-linecap="round" stroke-linejoin="round"/>
<path d="M0 1092 Q0 1106 14 1106 H0 Z" fill="#0b0a08"/>
<path d="M1999 1092 Q1999 1106 1985 1106 H1999 Z" fill="#0b0a08"/>
</svg>
</body></html>
